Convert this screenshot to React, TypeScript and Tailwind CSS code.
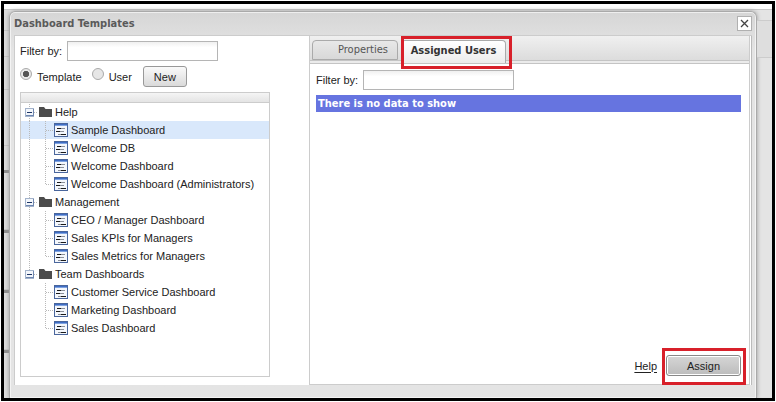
import { useState } from 'react';
import clsx from 'clsx';

const GROUPS = [
  { name: 'Help', items: ['Sample Dashboard', 'Welcome DB', 'Welcome Dashboard', 'Welcome Dashboard (Administrators)'] },
  { name: 'Management', items: ['CEO / Manager Dashboard', 'Sales KPIs for Managers', 'Sales Metrics for Managers'] },
  { name: 'Team Dashboards', items: ['Customer Service Dashboard', 'Marketing Dashboard', 'Sales Dashboard'] },
];

const inputClass =
  'h-5 w-[151px] border border-[#b5b5b5] bg-linear-to-b from-[#f0f0f0] to-white to-30% px-1 text-[11px] outline-none';

function Expander({ first, last }: { first: boolean; last: boolean }) {
  return (
    <svg width="18" height="18" viewBox="0 0 18 18" fill="none" className="shrink-0" aria-hidden="true">
      <path d={`M8.5 ${first ? 1 : 0}V${last ? 9 : 18}M9 9.5h8`} stroke="#b9b9b9" strokeDasharray="1 1" />
      <rect x="4.5" y="5.5" width="8" height="8" fill="#f3f6fb" stroke="#a3b3cb" />
      <path d="M5 12.5h8M12.5 6v7" stroke="#6f87b0" />
      <path d="M6 9.5h5" stroke="#1c3566" />
    </svg>
  );
}

function FolderIcon() {
  return (
    <svg width="13" height="10" viewBox="0 0 13 10" className="shrink-0" aria-hidden="true">
      <path d="M0 0h5l1.5 2H13v8H0z" fill="#4c4c4c" />
    </svg>
  );
}

function Connector({ trunk, last }: { trunk: boolean; last: boolean }) {
  return (
    <svg width="33" height="18" viewBox="0 0 33 18" fill="none" className="shrink-0" aria-hidden="true">
      {trunk && <path d="M8.5 0v18" stroke="#b9b9b9" strokeDasharray="1 1" />}
      <path d={`M24.5 0v${last ? 10 : 18}M25 9.5h7`} stroke="#b9b9b9" strokeDasharray="1 1" />
    </svg>
  );
}

function DashboardIcon() {
  return (
    <svg width="14" height="14" viewBox="0 0 14 14" fill="none" className="shrink-0" aria-hidden="true">
      <rect x=".5" y=".5" width="13" height="13" fill="#f4f7fc" stroke="#4a669c" />
      <path d="M1 1.5h12" stroke="#3f6dc4" />
      <path d="M1 2.5h12" stroke="#7ea2e0" />
      <path d="M3 5.5h4M2 8.5h4M7 11.5h5" stroke="#1a1a1a" />
      <path d="M7 5.5h4M6 8.5h4M4 11.5h3" stroke="#8a8f99" />
    </svg>
  );
}

// Strip of the page that shows beside the dialog
function PageEdge() {
  return (
    <div className="flex w-[5px] shrink-0 flex-col bg-[#dedede] pt-5">
      <div className="h-[27px] border-y border-[#c9c9c9]" />
      <div className="h-[33px] border-b border-[#c9c9c9]" />
      <div className="h-[56px] border-b border-[#c9c9c9]" />
      {[0, 1, 2, 3].map((n) => (
        <div key={n} className="flex h-[60px] shrink-0 flex-col">
          <div className={clsx('h-6 shrink-0', n > 0 && 'border-b border-[#c9c9c9]')} />
          <div className="h-[3px] shrink-0 bg-[#8c8c8c]" />
        </div>
      ))}
    </div>
  );
}

export default function App() {
  const [selected, setSelected] = useState('Sample Dashboard');
  const [kind, setKind] = useState('template');

  return (
    <div className="h-screen bg-white p-px font-['Liberation_Sans',Arial,sans-serif] text-[11px] leading-4 text-[#222]">
      <div className="flex h-full flex-col overflow-hidden border-[3px] border-black bg-[#e4e4e4]">
        <div className="h-[6px] shrink-0 border-b border-[#c8c8c8] bg-white" />
        <div className="flex min-h-0 flex-1">
          <PageEdge />

          <section className="mt-px flex min-w-0 flex-1 flex-col rounded-t-md border border-b-0 border-[#aaa] bg-linear-to-b from-[#d6d6d6] to-[#e4e4e4] to-10% px-1 shadow-[0_0_4px_#999] ring-1 ring-white/60 ring-inset">
            <header className="flex h-[23px] shrink-0 items-center justify-between">
              <h1 className="font-['DejaVu_Sans_Condensed','DejaVu_Sans',sans-serif] text-[11px] font-bold text-[#5a5a5a]">
                Dashboard Templates
              </h1>
              <button
                aria-label="Close"
                className="flex size-[15px] items-center justify-center border border-[#b0b0b0] bg-white"
              >
                <svg width="9" height="9" viewBox="0 0 9 9" aria-hidden="true">
                  <path d="M1 1l7 7M8 1L1 8" stroke="#444" strokeWidth="1.3" />
                </svg>
              </button>
            </header>

            <div className="mb-[13px] flex min-h-0 flex-1 border-t border-l border-[#ccc] bg-white">
              <div className="flex w-[294px] shrink-0 flex-col pt-[5px] pr-[39px] pb-2 pl-[5px]">
                <div className="flex items-center">
                  <label htmlFor="template-filter" className="w-[47px]">Filter by:</label>
                  <input id="template-filter" className={inputClass} />
                </div>
                <div className="mt-[5px] flex h-[21px] items-center">
                  <Radio label="Template" checked={kind === 'template'} onSelect={() => setKind('template')} />
                  <span className="w-2.5" />
                  <Radio label="User" checked={kind === 'user'} onSelect={() => setKind('user')} />
                  <button className="ml-[11px] h-[21px] w-11 rounded-[3px] border border-[#999] bg-linear-to-b from-[#fafafa] to-[#dadada]">
                    New
                  </button>
                </div>

                <div className="mt-[5px] min-h-0 flex-1 border border-[#ccc]">
                  <div className="h-[10px] border-b border-[#ccc] bg-linear-to-b from-[#f5f5f5] to-[#e4e4e4]" />
                  <ul>
                    {GROUPS.map((group, g) => {
                      const lastGroup = g === GROUPS.length - 1;
                      return (
                        <li key={group.name}>
                          <div className="flex h-[18px] items-center">
                            <Expander first={g === 0} last={lastGroup} />
                            <FolderIcon />
                            <span className="ml-[3px]">{group.name}</span>
                          </div>
                          <ul>
                            {group.items.map((item, i) => (
                              <li key={item}>
                                <button
                                  onClick={() => setSelected(item)}
                                  className={clsx(
                                    'flex h-[18px] w-full items-center text-left whitespace-nowrap',
                                    selected === item && 'bg-[#d9e8fb]',
                                  )}
                                >
                                  <Connector trunk={!lastGroup} last={i === group.items.length - 1} />
                                  <DashboardIcon />
                                  <span className="ml-[3px]">{item}</span>
                                </button>
                              </li>
                            ))}
                          </ul>
                        </li>
                      );
                    })}
                  </ul>
                </div>
              </div>

              <div className="mr-px flex min-w-0 flex-1 flex-col border-x border-b border-[#ccc]">
                <div
                  role="tablist"
                  className="flex h-7 shrink-0 items-end gap-[3px] border-b border-[#c4c4c4] bg-[linear-gradient(#f0f0f0,#dcdcdc_24px,#c4c4c4_24px,#c4c4c4_25px,#ebebeb_25px)] pl-[2px] font-['DejaVu_Sans_Condensed','DejaVu_Sans',sans-serif] text-[11px]"
                >
                  <button
                    role="tab"
                    aria-selected="false"
                    className="mb-[3px] h-5 w-[86px] rounded-t-[4px] border border-[#aaa] bg-linear-to-b from-[#e8e8e8] to-[#d8d8d8] pl-4 text-[#555]"
                  >
                    Properties
                  </button>
                  <div className="relative">
                    <button
                      role="tab"
                      aria-selected="true"
                      className="block h-[23px] w-[105px] rounded-t-[4px] border border-b-0 border-[#aaa] bg-linear-to-b from-white to-[#ececec] pb-[3px] font-bold text-[#333]"
                    >
                      Assigned Users
                    </button>
                    <div className="pointer-events-none absolute -top-1 left-0 h-[33px] w-[111px] border-[3px] border-[#d8202a]" />
                  </div>
                </div>

                <div className="flex flex-1 flex-col pt-[6px] pr-2 pb-2 pl-[6px]">
                  <div className="flex items-center">
                    <label htmlFor="user-filter" className="w-[47px]">Filter by:</label>
                    <input id="user-filter" className={inputClass} />
                  </div>
                  <p className="mt-[5px] h-[17px] bg-[#6674e0] px-[2px] font-['DejaVu_Sans_Condensed','DejaVu_Sans',sans-serif] text-[11px] leading-[17px] font-bold text-white">
                    There is no data to show
                  </p>
                  <div className="mt-auto flex items-center justify-end gap-[9px]">
                    <a href="#help" className="underline underline-offset-2">Help</a>
                    <div className="relative">
                      <button className="block h-[21px] w-[75px] rounded-[3px] border border-[#888] bg-linear-to-b from-[#d6d6d6] to-[#bcbcbc] ring-1 ring-white ring-inset">
                        Assign
                      </button>
                      <div className="pointer-events-none absolute -top-[7px] -left-1 h-[37px] w-[84px] border-[3px] border-[#d8202a]" />
                    </div>
                  </div>
                </div>
              </div>
              <div className="w-px bg-[#bbb]" />
            </div>
          </section>

          <div className="w-[15px] shrink-0 pt-[10px]">
            <div className="h-[38px] border-y border-[#ccc] bg-[#dedede]" />
          </div>
        </div>
      </div>
    </div>
  );
}

function Radio({ label, checked, onSelect }: { label: string; checked: boolean; onSelect: () => void }) {
  return (
    <label className="flex items-center gap-[5px]">
      <input
        type="radio"
        name="kind"
        checked={checked}
        onChange={onSelect}
        className="mb-1.5 size-3 appearance-none rounded-full border border-[#aaa] bg-[#e6e6e6] bg-radial checked:from-[#555] checked:from-40% checked:to-[#e8e8e8] checked:to-50%"
      />
      {label}
    </label>
  );
}
